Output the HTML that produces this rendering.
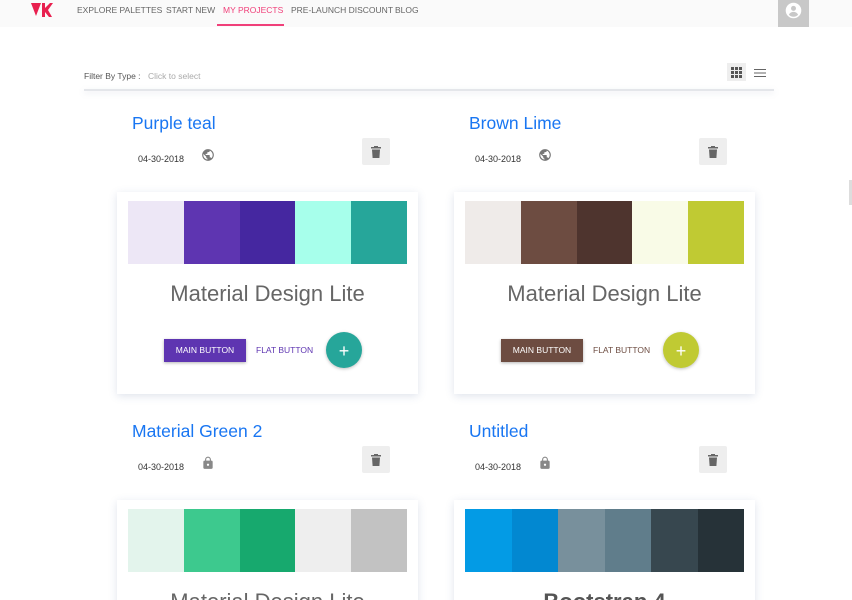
<!DOCTYPE html>
<html><head><meta charset="utf-8"><style>
*{margin:0;padding:0;box-sizing:border-box}
html,body{width:852px;height:600px;overflow:hidden}
body{background:#fff;font-family:"Liberation Sans",sans-serif;position:relative}
.nav{position:absolute;left:0;top:0;width:852px;height:27px;background:#fafafa}
.nav a{position:absolute;top:5px;font-size:8.5px;color:#666;text-decoration:none}
.ab{position:absolute}
.blk{position:absolute;width:301px;height:300px}
.ttl{position:absolute;left:15px;top:8px;font-size:17.5px;color:#1976f2}
.dt{position:absolute;left:21px;top:49px;font-size:9px;color:#333}
.ic{position:absolute;left:84px;top:43px}
.tr{position:absolute;left:245px;top:33px;width:28px;height:27px;background:#eee;border-radius:2px}
.card{position:absolute;left:0;top:87px;width:301px;height:202px;background:#fff;box-shadow:0 2px 8px rgba(80,100,150,.18)}
.sw{position:absolute;left:11px;top:9px;width:279px;height:63px;display:flex}
.sw div{flex:1}
.mdl{position:absolute;top:89px;width:100%;text-align:center;font-size:22px;color:#666}
.mb{position:absolute;left:47px;top:147px;width:82px;height:23px;color:#fff;font-size:8.5px;text-align:center;line-height:23px;box-shadow:0 1px 3px rgba(0,0,0,.3)}
.fb{position:absolute;left:139px;top:147px;line-height:23px;font-size:8.5px}
.fab{position:absolute;left:209px;top:140px;width:36px;height:36px;border-radius:50%;color:#fff;font-size:18px;text-align:center;line-height:38px;box-shadow:0 1px 3px rgba(0,0,0,.25)}
</style></head><body>
<div class="nav">
<svg class="ab" style="left:31px;top:3px" width="22" height="14" viewBox="0 0 22 14"><path d="M0 0h10L5 13z" fill="#e8204f"/><path d="M11 0h3v5l5-5h3l-5 7 4 7h-3l-4-5v5h-3z" fill="#e8204f"/></svg>
<a style="left:77px">EXPLORE PALETTES</a>
<a style="left:166px">START NEW</a>
<a style="left:223px;color:#f0407a">MY PROJECTS</a>
<a style="left:291px">PRE-LAUNCH DISCOUNT</a>
<a style="left:395px">BLOG</a>
<div class="ab" style="left:217px;top:24px;width:67px;height:2px;background:#f0407a"></div>
<div class="ab" style="left:778px;top:0;width:31px;height:27px;background:#c8c8c8"><svg style="position:absolute;left:7px;top:2px" width="17" height="17" viewBox="0 0 24 24"><circle cx="12" cy="12" r="11" fill="#fff"/><circle cx="12" cy="9" r="3.5" fill="#c8c8c8"/><path d="M5.5 18c1.5-3 4-4 6.5-4s5 1 6.5 4a9 9 0 0 1-13 0z" fill="#c8c8c8"/></svg></div>
</div>
<div class="ab" style="left:84px;top:71px;font-size:8.5px;color:#555">Filter By Type :</div>
<div class="ab" style="left:148px;top:71px;font-size:8.5px;color:#aaa">Click to select</div>
<div class="ab" style="left:727px;top:63px;width:19px;height:18px;background:#eee"><svg style="position:absolute;left:4px;top:4px" width="11" height="11" viewBox="0 0 11 11" fill="#555"><rect x="0" y="0" width="3" height="3"/><rect x="4" y="0" width="3" height="3"/><rect x="8" y="0" width="3" height="3"/><rect x="0" y="4" width="3" height="3"/><rect x="4" y="4" width="3" height="3"/><rect x="8" y="4" width="3" height="3"/><rect x="0" y="8" width="3" height="3"/><rect x="4" y="8" width="3" height="3"/><rect x="8" y="8" width="3" height="3"/></svg></div>
<svg class="ab" style="left:754px;top:68px" width="12" height="10" viewBox="0 0 12 10" fill="#666"><rect y="1" width="12" height="1"/><rect y="4.5" width="12" height="1"/><rect y="8" width="12" height="1"/></svg>
<div class="ab" style="left:84px;top:89px;width:690px;height:2px;background:#e4e6ea;box-shadow:0 2px 6px rgba(150,160,180,.25)"></div>
<div class="ab" style="left:849px;top:180px;width:3px;height:25px;background:#ddd"></div>

<div class="blk" style="left:117px;top:105px">
<div class="ttl">Purple teal</div><div class="dt">04-30-2018</div>
<svg class="ic" width="14" height="14" viewBox="0 0 24 24"><path fill="#777" d="M12 2a10 10 0 1 0 0 20 10 10 0 0 0 0-20zm-1 17.9A8 8 0 0 1 4.2 10.2L9 15v1a2 2 0 0 0 2 2zm6.9-2.5A2 2 0 0 0 16 16h-1v-3a1 1 0 0 0-1-1H8v-2h2a1 1 0 0 0 1-1V7h2a2 2 0 0 0 2-2v-.4a8 8 0 0 1 2.9 12.8z"/></svg>
<div class="tr"><svg style="position:absolute;left:9px;top:8px" width="10" height="12" viewBox="0 0 10 12" fill="#666"><rect x="0" y="1" width="10" height="1.5"/><rect x="3" y="0" width="4" height="1.5"/><path d="M1 3.5h8l-.6 8.5H1.6z"/></svg></div>
<div class="card"><div class="sw"><div style="background:#ede7f6"></div><div style="background:#5e35b1"></div><div style="background:#4527a0"></div><div style="background:#a7ffeb"></div><div style="background:#26a69a"></div></div>
<div class="mdl">Material Design Lite</div>
<div class="mb" style="background:#5e35b1">MAIN BUTTON</div><div class="fb" style="color:#5e35b1">FLAT BUTTON</div><div class="fab" style="background:#26a69a">+</div></div>
</div>
<div class="blk" style="left:454px;top:105px">
<div class="ttl">Brown Lime</div><div class="dt">04-30-2018</div>
<svg class="ic" width="14" height="14" viewBox="0 0 24 24"><path fill="#777" d="M12 2a10 10 0 1 0 0 20 10 10 0 0 0 0-20zm-1 17.9A8 8 0 0 1 4.2 10.2L9 15v1a2 2 0 0 0 2 2zm6.9-2.5A2 2 0 0 0 16 16h-1v-3a1 1 0 0 0-1-1H8v-2h2a1 1 0 0 0 1-1V7h2a2 2 0 0 0 2-2v-.4a8 8 0 0 1 2.9 12.8z"/></svg>
<div class="tr"><svg style="position:absolute;left:9px;top:8px" width="10" height="12" viewBox="0 0 10 12" fill="#666"><rect x="0" y="1" width="10" height="1.5"/><rect x="3" y="0" width="4" height="1.5"/><path d="M1 3.5h8l-.6 8.5H1.6z"/></svg></div>
<div class="card"><div class="sw"><div style="background:#efebe9"></div><div style="background:#6d4c41"></div><div style="background:#4e342e"></div><div style="background:#f9fbe7"></div><div style="background:#c0ca33"></div></div>
<div class="mdl">Material Design Lite</div>
<div class="mb" style="background:#6d4c41">MAIN BUTTON</div><div class="fb" style="color:#6d4c41">FLAT BUTTON</div><div class="fab" style="background:#c0ca33">+</div></div>
</div>
<div class="blk" style="left:117px;top:413px">
<div class="ttl">Material Green 2</div><div class="dt">04-30-2018</div>
<svg class="ic" width="14" height="14" viewBox="0 0 24 24"><path fill="#888" d="M18 8h-1V6a5 5 0 0 0-10 0v2H6a2 2 0 0 0-2 2v10a2 2 0 0 0 2 2h12a2 2 0 0 0 2-2V10a2 2 0 0 0-2-2zm-6 9a2 2 0 1 1 0-4 2 2 0 0 1 0 4zm3.1-9H8.9V6a3.1 3.1 0 0 1 6.2 0z"/></svg>
<div class="tr"><svg style="position:absolute;left:9px;top:8px" width="10" height="12" viewBox="0 0 10 12" fill="#666"><rect x="0" y="1" width="10" height="1.5"/><rect x="3" y="0" width="4" height="1.5"/><path d="M1 3.5h8l-.6 8.5H1.6z"/></svg></div>
<div class="card"><div class="sw"><div style="background:#e3f4ec"></div><div style="background:#3dc98e"></div><div style="background:#17a96e"></div><div style="background:#eeeeee"></div><div style="background:#c2c2c2"></div></div>
<div class="mdl">Material Design Lite</div></div>
</div>
<div class="blk" style="left:454px;top:413px">
<div class="ttl">Untitled</div><div class="dt">04-30-2018</div>
<svg class="ic" width="14" height="14" viewBox="0 0 24 24"><path fill="#888" d="M18 8h-1V6a5 5 0 0 0-10 0v2H6a2 2 0 0 0-2 2v10a2 2 0 0 0 2 2h12a2 2 0 0 0 2-2V10a2 2 0 0 0-2-2zm-6 9a2 2 0 1 1 0-4 2 2 0 0 1 0 4zm3.1-9H8.9V6a3.1 3.1 0 0 1 6.2 0z"/></svg>
<div class="tr"><svg style="position:absolute;left:9px;top:8px" width="10" height="12" viewBox="0 0 10 12" fill="#666"><rect x="0" y="1" width="10" height="1.5"/><rect x="3" y="0" width="4" height="1.5"/><path d="M1 3.5h8l-.6 8.5H1.6z"/></svg></div>
<div class="card"><div class="sw"><div style="background:#039be5"></div><div style="background:#0288d1"></div><div style="background:#78909c"></div><div style="background:#607d8b"></div><div style="background:#37474f"></div><div style="background:#263238"></div></div>
<div class="mdl" style="font-weight:bold;color:#555">Bootstrap 4</div></div>
</div>
</body></html>
